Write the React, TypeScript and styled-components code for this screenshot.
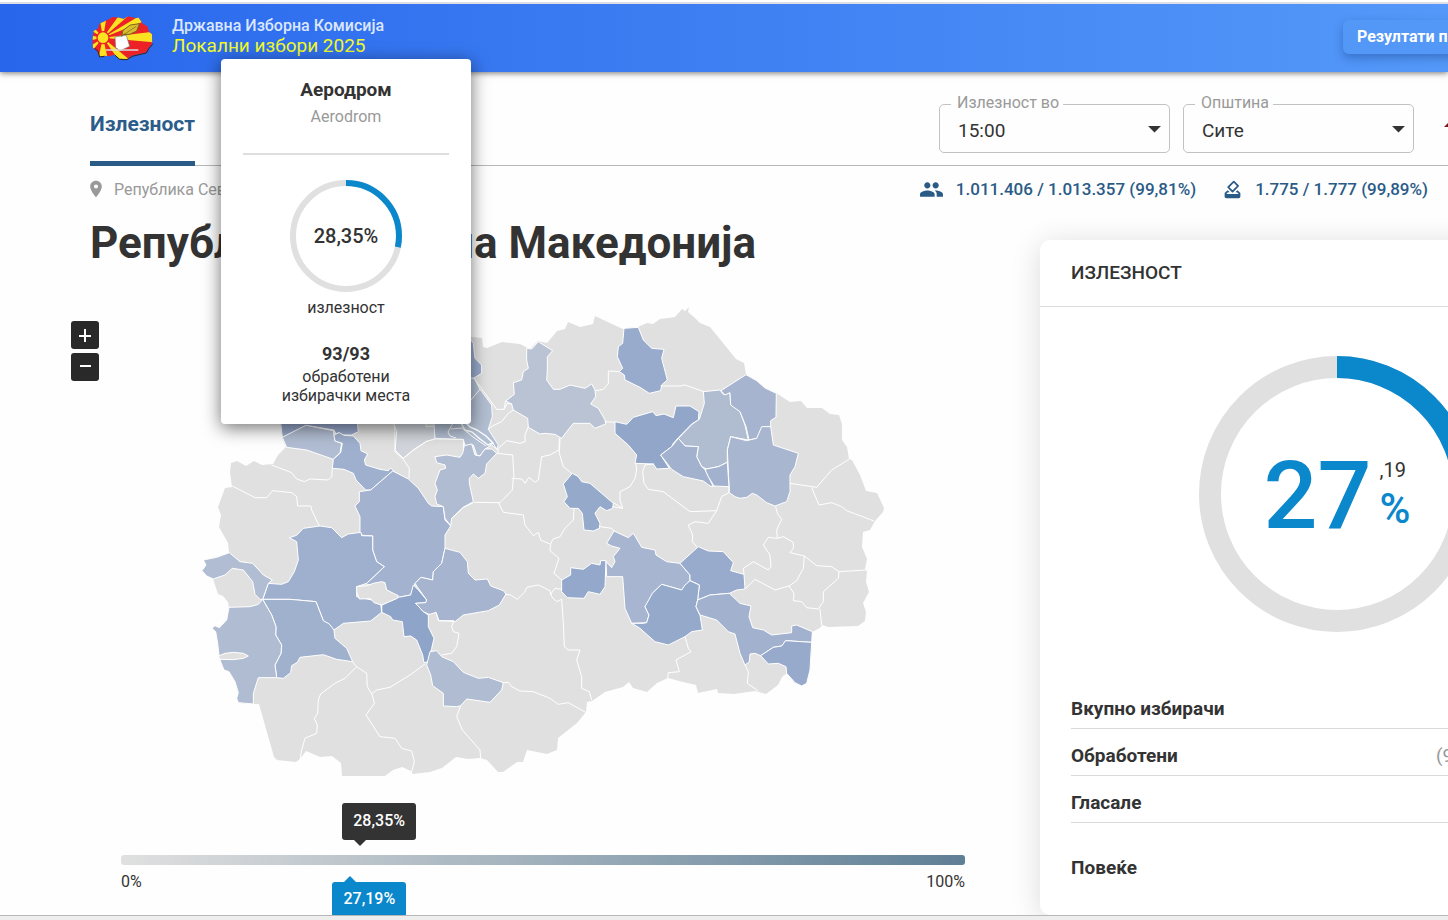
import React from 'react';
import styled, { createGlobalStyle } from 'styled-components';
import { MdArrowDropDown, MdHowToVote, MdLocationOn, MdPeople } from 'react-icons/md';

const GlobalStyle = createGlobalStyle`
  *, *::before, *::after { box-sizing: border-box; }
  body {
    margin: 0;
    background: #fefefe;
    color: #333;
    font-family: Roboto, "Noto Sans", sans-serif;
    font-size: 16px;
  }
  h1, h2, p, ul, dl, dd { margin: 0; padding: 0; }
  button, select { font-family: inherit; }
`;

const Page = styled.div`
  position: relative;
  display: flex;
  flex-direction: column;
  min-height: 100vh;
  overflow: hidden;
  border-top: 2px solid #fff;
`;

const Header = styled.header`
  display: flex;
  align-items: center;
  height: 70px;
  flex: none;
  padding-left: 91px;
  border-top: 2px solid #dcdfe6;
  background: linear-gradient(90deg, #2866ec, #5499f9);
  box-shadow: 0 1px 6px rgba(0, 0, 0, 0.55);
  z-index: 1;
`;

const Brand = styled.a`
  display: flex;
  align-items: center;
  gap: 18px;
  text-decoration: none;
`;

const BrandText = styled.span`
  display: flex;
  flex-direction: column;
  margin-top: -4px;
`;

const Institution = styled.span`
  color: #dbe7ff;
  font-size: 16px;
  font-weight: 500;
  line-height: 20px;
`;

const ElectionName = styled.span`
  color: #f2fb26;
  font-size: 19px;
  line-height: 20px;
`;

const ResultsButton = styled.button`
  width: 200px;
  height: 34px;
  margin: 0 -95px 2px auto;
  padding: 0 14px 2px;
  border: 0;
  border-radius: 6px;
  background: #5397f7;
  color: #fff;
  font-size: 16px;
  font-weight: 700;
  text-align: left;
  white-space: nowrap;
  box-shadow: 0 4px 10px rgba(20, 60, 130, 0.4);
`;

const Main = styled.main`
  flex: 1;
  padding-left: 90px;
`;

const TopBar = styled.div`
  display: flex;
  align-items: stretch;
  height: 94px;
  border-bottom: 1px solid #b5b9bc;
`;

const Tab = styled.a`
  height: 94px;
  padding-top: 38px;
  border-bottom: 5px solid #2a5b87;
  color: #2c5c89;
  font-size: 21px;
  font-weight: 700;
  line-height: 28px;
  text-decoration: none;
`;

const Filters = styled.div`
  display: flex;
  gap: 13px;
  margin-left: auto;
  margin-right: -6px;
  padding-top: 32px;
`;

const Field = styled.div`
  position: relative;
  width: 231px;
  height: 49px;
  border: 1px solid #c2c2c2;
  border-radius: 5px;
`;

const FieldLabel = styled.label`
  position: absolute;
  top: -12px;
  left: 11px;
  padding: 0 4px 0 6px;
  background: #fefefe;
  color: #999;
  font-size: 16px;
  line-height: 20px;
`;

const Select = styled.select`
  width: 100%;
  height: 100%;
  padding: 4px 40px 0 18px;
  border: 0;
  background: transparent;
  color: #333;
  font-size: 19px;
  appearance: none;
`;

const Caret = styled(MdArrowDropDown)`
  position: absolute;
  top: 8px;
  right: -1px;
  width: 31px;
  height: 31px;
  pointer-events: none;
`;

const Alert = styled.svg`
  flex: none;
  width: 12px;
  height: 24px;
  margin: 12px 0 0 15px;
`;

const InfoRow = styled.div`
  display: flex;
  align-items: center;
  justify-content: space-between;
  height: 46px;
  padding-right: 20px;
`;

const Breadcrumb = styled.a`
  display: flex;
  align-items: center;
  gap: 8px;
  margin-left: -4px;
  color: #999;
  text-decoration: none;
`;

const Stats = styled.div`
  display: flex;
  gap: 26px;
`;

const Stat = styled.span`
  display: flex;
  align-items: center;
  gap: 12px;
  color: #2a5b87;
  font-size: 17px;
  font-weight: 500;
`;

const Columns = styled.div`
  display: grid;
  grid-template-columns: minmax(0, 1fr) 594px;
  margin-right: -186px;
`;

const Title = styled.h1`
  padding-top: 3px;
  font-size: 44px;
  font-weight: 700;
  line-height: 56px;
`;

const MapRow = styled.div`
  display: flex;
  align-items: flex-start;
  margin: 29px 0 0 -19px;
`;

const ZoomButtons = styled.div`
  display: flex;
  flex-direction: column;
  gap: 4px;
  margin-top: 21px;
  margin-right: 101px;
`;

const ZoomButton = styled.button`
  display: grid;
  place-items: center;
  width: 28px;
  height: 28px;
  padding: 0;
  border: 0;
  border-radius: 3px;
  background: #292929;
`;

const MapSvg = styled.svg`
  display: block;
  width: 690px;
  height: 480px;
`;

const Legend = styled.div`
  position: relative;
  margin: 23px 75px 0 31px;
`;

const LegendTop = styled.div`
  position: relative;
  height: 52px;
`;

const LegendBar = styled.div`
  height: 10px;
  border-radius: 3px;
  background: linear-gradient(90deg, #e0e0e0, #5f7f96);
`;

const LegendLabels = styled.div`
  display: flex;
  justify-content: space-between;
  padding-top: 7px;
  line-height: 20px;
`;

const Marker = styled.span<{ $color: string; $below?: boolean }>`
  position: absolute;
  top: ${(p) => (p.$below ? '79px' : '0')};
  height: 37px;
  margin-left: -18px;
  padding: 0 11px;
  border-radius: 3px;
  background: ${(p) => p.$color};
  color: #fff;
  font-weight: 500;
  line-height: ${(p) => (p.$below ? '34px' : '35px')};

  &::after {
    content: '';
    position: absolute;
    left: 12px;
    ${(p) => (p.$below ? 'bottom' : 'top')}: 100%;
    border: 6px solid transparent;
    border-${(p) => (p.$below ? 'top' : 'bottom')}-width: 0;
    border-${(p) => (p.$below ? 'bottom' : 'top')}-color: ${(p) => p.$color};
  }
`;

const Card = styled.section`
  margin-top: 28px;
  border-radius: 10px;
  background: #fff;
  box-shadow: 0 4px 30px rgba(0, 0, 0, 0.14);
`;

const CardTitle = styled.h2`
  padding: 0 31px;
  border-bottom: 1px solid #dcdcdc;
  font-size: 19px;
  font-weight: 500;
  line-height: 66px;
`;

const Chart = styled.div`
  display: grid;
  place-items: center;
  padding: 49px 0 50px;
  > * { grid-area: 1 / 1; }
`;

const ChartValue = styled.div`
  display: flex;
  align-items: center;
  gap: 8px;
  padding-top: 3px;
`;

const Whole = styled.span`
  color: #0b87cb;
  font-size: 95px;
  font-weight: 500;
  line-height: 96px;
`;

const Rest = styled.span`
  display: flex;
  flex-direction: column;
  font-size: 20px;
  line-height: 26px;
`;

const Percent = styled.span`
  color: #0b87cb;
  font-size: 42px;
  font-weight: 500;
  line-height: 52px;
`;

const Row = styled.div`
  display: flex;
  justify-content: space-between;
  align-items: center;
  height: 47px;
  margin: 0 31px;
  padding-top: 6px;
  border-bottom: 1px solid #d9d9d9;
  font-size: 19px;
`;

const RowName = styled.span`
  font-weight: 700;
`;

const RowShare = styled.span`
  width: 167px;
  color: #999;
`;

const More = styled.a`
  display: block;
  margin: 0 31px;
  padding-bottom: 2px;
  color: #333;
  font-size: 19px;
  font-weight: 700;
  line-height: 90px;
  text-decoration: none;
`;

const Popup = styled.aside`
  position: absolute;
  z-index: 2;
  top: 57px;
  left: 221px;
  display: flex;
  flex-direction: column;
  align-items: center;
  width: 250px;
  padding: 18px 22px 19px;
  border-radius: 4px;
  background: #fff;
  box-shadow: 0 4px 18px rgba(0, 0, 0, 0.55);
  text-align: center;
`;

const PopupName = styled.strong`
  font-size: 19px;
  line-height: 26px;
`;

const PopupLatin = styled.span`
  margin-bottom: 22px;
  color: #999;
  line-height: 28px;
`;

const PopupChart = styled.div`
  display: grid;
  place-items: center;
  width: 100%;
  padding-top: 25px;
  border-top: 2px solid #dedede;
  font-size: 20px;
  font-weight: 500;
  > * { grid-area: 1 / 1; }
`;

const PopupText = styled.span`
  line-height: 19px;
`;

const PopupLabel = styled.span`
  margin: 4px 0 24px;
  line-height: 24px;
`;

const PopupCount = styled.strong`
  margin-bottom: 3px;
  font-size: 18px;
  font-weight: 700;
  line-height: 20px;
`;

const BottomEdge = styled.div`
  position: relative;
  z-index: 1;
  flex: none;
  height: 5px;
  border-top: 1px solid #b8b8b8;
  background: #eee;
`;

const Body = styled.div`
  display: flex;
  flex-direction: column;
  height: calc(100vh - 77px);
  min-height: 840px;
  overflow: hidden;
`;

type Ring = { size: number; stroke: number; value: number };

function Donut({ size, stroke, value }: Ring) {
  const r = (size - stroke) / 2;
  const length = 2 * Math.PI * r;
  return (
    <svg width={size} height={size} viewBox={`0 0 ${size} ${size}`} aria-hidden="true">
      <g fill="none" strokeWidth={stroke} transform={`rotate(-90 ${size / 2} ${size / 2})`}>
        <circle cx={size / 2} cy={size / 2} r={r} stroke="#e0e0e0" />
        <circle
          cx={size / 2}
          cy={size / 2}
          r={r}
          stroke="#0b87cb"
          strokeDasharray={`${(length * value) / 100} ${length}`}
        />
      </g>
    </svg>
  );
}

function Logo() {
  return (
    <svg width="63" height="46" viewBox="0 0 189 138" aria-hidden="true">
      <defs>
        <clipPath id="country">
          <path d="M8 48 L22 40 L25 26 L48 16 L65 6 L85 8 L98 12 L112 4 L132 9 L143 8 L155 26 L168 33 L175 52 L183 58 L184 85 L172 100 L166 112 L142 118 L122 122 L108 132 L85 131 L72 119 L55 124 L40 122 L25 125 L18 108 L6 98 L4 78 Z" />
        </clipPath>
      </defs>
      <g clipPath="url(#country)">
        <path d="M0 0H189V138H0Z" fill="#ec2227" />
        <g fill="#fbe321">
          <path d="M36 68 L189 50 V82 Z" />
          <path d="M36 68 L85 0 L115 0 Z" />
          <path d="M36 68 L150 0 L170 14 Z" />
          <path d="M36 68 L120 138 L85 138 Z" />
          <path d="M36 68 L20 138 H52 Z" />
          <path d="M36 68 L24 0 H48 Z" />
          <path d="M36 68 L0 28 V46 Z" />
          <path d="M36 68 L0 92 V112 Z" />
          <path d="M36 68 L0 62 V76 Z" />
        </g>
        <circle cx="36" cy="68" r="20" fill="#ec2227" />
        <circle cx="36" cy="68" r="16" fill="#fbe321" />
      </g>
      <path d="M72 66 L106 61 L116 94 L88 107 L74 98 Z" fill="#fff" stroke="#777" strokeWidth="2" />
      <path d="M92 64 L96 46 L118 30 L145 26 L137 48 L116 58 L98 58 Z" fill="#d9bd2e" stroke="#79671d" strokeWidth="3" />
      <path d="M96 60 L136 34" stroke="#79671d" strokeWidth="2" />
      <path d="M45 105 H142" stroke="#ddd" strokeWidth="4" />
      <path d="M10 100 L22 110 L26 126 L40 124 M72 121 L86 133 L108 134 L124 124 L166 114 L174 100 L186 86" fill="none" stroke="#33241c" strokeWidth="3" />
    </svg>
  );
}

const outline =
  '640,326 647,323 653,324 660,319 668,318 675,317 682,309 685,311 689,307 688,312 695,318 700,323 710,327 723,343 736,359 744,363 746,374 757,381 765,388 776,393 790,402 801,401 807,408 822,408 830,414 839,415 842,424 842,440 847,447 849,459 852,460 860,475 866,491 877,493 884,508 883,512 875,521 870,530 863,532 862,547 867,559 865,569 867,571 866,582 869,592 863,603 866,612 865,621 858,626 828,627 822,625 820,628 812,632 812,643 810,670 807,683 802,686 795,683 787,673 782,677 778,685 766,694 755,691 734,694 718,693 717,689 698,693 696,685 683,682 668,678 657,683 647,692 633,688 629,682 623,687 605,692 592,701 587,702 586,712 577,723 558,738 557,750 547,754 527,750 523,762 517,762 503,772 498,772 487,760 480,758 468,759 456,757 442,768 430,772 413,774 411,771 402,767 393,770 385,776 342,776 341,763 332,756 320,757 306,751 300,759 296,762 277,760 274,757 259,704 253,704 238,703 237,698 238,693 235,682 229,672 224,670 219,658 218,643 216,632 212,628 215,626 219,628 227,620 229,608 228,602 223,596 218,594 216,588 213,579 207,576 202,571 206,565 203,560 217,557 229,553 228,543 219,527 221,515 218,507 225,488 232,487 230,472 231,463 237,461 246,466 254,461 262,465 273,464 278,455 286,447 282,438 281,428 275,400 330,360 400,340 460,340 472,337 482,338 483,347 487,348 502,342 520,344 530,349 538,341 547,343 557,331 565,329 568,322 580,327 593,324 595,316 612,324 623,329 638,327';

type Sheet = { origin: [number, number]; areas: [string, string][]; borders: string[] };

// Each sheet holds its municipalities at three units to the map unit, from its own origin.
const sheets: Sheet[] = [
  {
    origin: [200, 400],
    areas: [
      ['#98a9cc', '240,50 247,112 318,76 402,90 408,102 415,98 430,105 455,105 475,95 470,50'],
      ['#b1bdd2', '247,112 318,76 400,92 405,123 425,130 420,158 400,178 320,150 260,142'],
      ['#9fb0ce', '402,105 418,98 432,106 460,108 480,130 483,152 503,162 493,180 497,195 540,208 565,212 572,204 580,212 512,270 497,270 468,240 460,220 432,208 397,205 400,178 422,158 427,130 405,123'],
      ['#d1d5db', '580,50 675,50 678,80 705,80 705,117 680,124 640,150 610,175 585,150 585,95'],
      ['#a3b2cf', '578,213 625,237 655,265 685,310 695,318 730,320 735,360 752,378 735,405 735,445 725,490 700,515 698,540 663,532 645,550 632,585 595,592 560,570 552,548 502,555 500,550 553,500 530,485 518,450 518,408 487,406 480,395 480,350 465,318 478,305 478,275 512,270'],
      ['#9fb0ce', '268,413 290,406 310,385 360,378 395,383 425,413 445,402 483,397 485,407 518,408 518,450 530,485 553,500 500,550 470,560 470,590 515,600 543,615 545,637 512,663 430,670 402,690 370,662 348,605 270,598 188,598 205,550 245,553 265,545 283,515 295,480 290,425'],
      ['#a0b1ce', '188,598 270,598 348,605 370,662 388,672 402,690 405,715 440,745 458,785 410,778 370,764 300,772 292,787 275,797 272,818 250,835 230,833 225,795 243,760 245,735 227,705 228,680 215,645'],
      ['#b1bdd2', '6,512 18,495 10,480 50,472 88,458 120,485 158,490 190,525 217,540 205,550 188,598 180,598 165,583 158,545 130,510 97,505 75,525 40,537 20,528'],
      ['#b0bcd1', '87,622 150,620 175,613 188,598 215,645 228,680 227,705 245,735 243,760 225,795 230,833 175,833 160,880 160,912 115,908 110,895 115,878 105,845 87,815 72,810 58,775 53,730 47,695 36,685 45,677 58,683 80,660'],
      ['#e0e0e0', '55,768 75,760 100,757 130,760 145,768 130,775 100,779 60,778'],
      ['#8fa4c9', '545,615 595,592 632,585 640,555 655,570 680,600 677,608 647,610 670,635 685,645 685,680 702,715 695,745 685,785 672,788 668,765 650,720 632,708 612,710 607,665 578,660 572,650 545,637'],
      ['#a7b4cf', '645,550 663,532 698,540 700,515 725,490 735,445 780,457 802,485 805,520 825,540 862,537 872,558 910,572 918,582 898,615 865,632 790,645 765,665 715,662 708,637 690,643 685,642 670,635 647,610 677,608 680,600 655,565'],
      ['#e0e0e0', '470,560 502,557 520,550 545,545 555,548 560,570 595,587 592,595 545,615 522,608 512,596 478,597 470,575'],
      ['#b0bcd1', '690,755 710,752 725,770 760,785 790,817 835,835 865,832 910,848 905,870 870,907 800,897 782,917 770,920 730,918 730,880 698,857 692,825 680,795'],
    ],
    borders: [
      '97,258 165,293 200,293 218,272 275,278 290,290 293,318 333,318 335,330 358,378',
      '215,195 275,218 290,237 313,245 330,237 385,240 395,230 397,205',
      '583,75 590,95 585,155 610,178 628,205 627,235',
      '610,175 640,150 680,124 705,117 790,118 792,170',
      '458,785 470,800 435,835 405,850 362,882 355,900 353,940 343,955 352,975 350,1000 315,1015 305,1050 300,1080',
      '470,800 500,820 502,860 517,885 523,910 498,945 540,1010 585,1015 605,1045 635,1053 643,1085 635,1115',
      '517,880 530,870 570,862 630,825 675,792',
      '545,637 545,615',
    ],
  },
  {
    origin: [430, 300],
    areas: [
      ['#9aabcd', '123,120 130,130 135,175 155,195 155,220 130,235 90,240 90,100'],
      ['#b3bfd2', '90,230 133,235 150,268 185,315 187,350 175,388 205,435 200,447 185,435 165,447 150,468 140,465 130,435 105,437 100,418 15,415 12,370 60,350'],
      ['#b0bcd1', '15,470 50,465 90,472 98,460 103,437 125,432 135,465 150,468 165,447 185,447 200,460 170,492 165,520 145,535 130,522 118,535 118,550 130,605 100,622 65,655 62,677 45,655 40,620 20,612 15,590 22,570 15,550 30,510 47,505 45,495 20,488'],
      ['#b9c3d3', '290,145 305,147 325,125 368,152 352,170 352,210 350,240 370,268 390,268 420,255 465,265 485,252 495,270 497,290 482,312 505,325 525,360 527,372 495,385 480,370 430,370 410,395 395,415 375,403 345,400 330,402 295,382 293,355 250,330 245,312 227,303 253,283 250,248 275,240 280,215 295,205 290,180'],
      ['#99abcd', '582,85 625,82 640,120 665,145 702,148 695,175 712,240 695,255 692,272 658,280 630,262 585,240 583,225 568,215 578,205 562,170 565,140 578,130'],
      ['#95a9cb', '400,552 427,520 445,530 455,545 480,550 550,610 548,625 530,632 510,620 495,640 510,670 508,685 490,693 462,690 457,640 445,625 420,625 402,605 412,590'],
      ['#93a8ca', '395,840 422,825 422,803 460,808 485,790 510,795 512,782 528,782 525,860 510,883 475,875 462,895 412,893 395,875'],
    ],
    borders: [
      '123,300 150,268',
      '133,235 200,328 222,328 227,303',
      '222,328 232,310 245,312',
      '175,388 187,378 215,365 235,340 250,330',
      '295,380 285,405 285,425 270,430 230,422 205,445 203,460 248,465 252,535',
      '245,535 275,537 285,550 297,532 315,547 325,540 335,470 360,465 387,450 388,415',
      '250,535 247,570 210,608 133,607',
      '390,415 388,460 400,500 425,520',
      '497,272 520,268 535,250 535,213 568,215',
      '527,365 557,367',
      '617,487 620,510 615,535 600,560 570,575 570,600 578,625 550,608',
      '548,620 578,625',
      '18,937 27,962 72,962',
      '72,962 65,980 70,995 87,1000 80,1040 65,1060 35,1065',
      '92,1217 80,1250 97,1290 150,1350 152,1375',
      '220,1148 235,1147 245,1160 270,1173 310,1175 360,1195 385,1213 415,1208 467,1237',
      '225,883 242,885 262,898 285,875 290,862 325,855 360,872 365,890 380,905 395,898 400,970 403,1040 415,1050 450,1050 440,1080 455,1130 455,1165 478,1175 485,1200',
      '360,885 375,865 395,868',
      '205,608 220,637 280,645 285,675 310,707 325,697 332,720 362,733 360,752 387,775 372,820 395,840',
      '362,733 368,718 390,710 405,685 430,660 432,625',
      '65,655 100,622 130,608',
      '510,680 545,685 552,693',
    ],
  },
  {
    origin: [640, 300],
    areas: [
      ['#92a6c9', '-75,365 -40,373 -20,352 38,335 48,347 72,342 100,353 108,318 150,318 177,335 175,360 155,372 115,413 100,430 95,440 62,465 88,505 50,507 40,492 -15,490 -10,465 -35,435 -75,400'],
      ['#a7b5d0', '-100,730 -78,693 -35,713 -20,700 5,742 45,750 48,765 80,785 120,790 150,825 150,842 125,870 65,853 37,880 30,905 15,920 27,945 20,968 -25,970 -45,925 -52,830 -100,830 -102,785 -85,803 -75,785 -80,770 -60,745 -85,738'],
      ['#b0bdd1', '190,275 240,270 250,283 270,278 272,310 300,335 315,375 325,420 272,410 262,450 262,487 235,500 200,507 185,500 170,470 175,440 135,438 115,415 157,372 178,358 193,310'],
      ['#a7b4cf', '243,272 318,224 350,242 375,264 409,280 408,352 392,362 392,380 370,380 350,415 327,420 318,380 300,335 272,315 270,278 255,285'],
      ['#a9b6d0', '392,380 400,435 475,460 465,500 450,525 450,575 440,605 405,618 380,608 350,585 337,580 320,592 300,595 285,590 268,578 262,450 272,410 320,422 350,415 365,380'],
      ['#a2b1ce', '115,415 135,438 175,440 170,470 185,500 195,508 220,560 210,558 190,543 130,530 95,508 62,465 95,440'],
      ['#a2b1ce', '195,508 235,500 262,487 267,560 222,558 205,530'],
      ['#98abcc', '120,790 175,740 205,753 250,755 280,788 272,812 312,823 315,867 290,870 268,880 210,885 173,900 178,855 150,842 150,825'],
      ['#95a9cb', '65,853 125,870 135,855 150,842 178,855 173,900 168,920 180,945 187,990 155,995 135,1010 85,1035 45,1025 0,985 -25,970 10,970 20,968 27,945 15,920 37,880'],
      ['#a1b1ce', '173,900 210,885 268,880 300,910 333,918 327,950 338,983 370,990 395,1005 455,998 455,978 470,975 517,995 515,1027 437,1022 425,1038 400,1042 362,1067 345,1060 330,1062 328,1085 315,1095 300,1060 285,1002 265,995 230,960 180,945 168,920'],
      ['#97aacb', '362,1067 400,1042 425,1038 437,1022 515,1027 510,1110 500,1150 485,1158 465,1148 440,1120 438,1100 415,1090 385,1092'],
    ],
    borders: [
      '15,495 8,515 12,550 25,568 70,575 150,635 230,632 245,590 267,578 267,560',
      '15,495 42,492',
      '230,632 205,670 165,665 145,675 158,705 157,725 170,740',
      '62,258 120,258 135,255 192,275',
      '450,550 530,562 575,510 627,478',
      '515,563 537,615 575,608 605,620 620,632 702,663',
      '407,620 412,640 425,658 410,690 412,715',
      '412,715 385,712 370,735 390,765 393,800 385,810 340,785 310,805 312,823',
      '412,715 430,710 460,727 460,745 450,758 493,768 490,805 470,842 447,858 405,870 345,838 315,867',
      '493,768 530,797 575,800 597,815 680,810',
      '597,815 595,835 550,875 550,905 535,927 500,923 485,905 460,902 462,880 447,858',
      '540,927 545,975',
      '135,1010 145,1045 153,1055 108,1080 118,1115 85,1118 83,1135',
      '315,1095 325,1115 322,1150 355,1173',
    ],
  },
];

function TurnoutMap() {
  return (
    <MapSvg viewBox="200 300 690 480" role="img" aria-label="Мапа на излезност">
      <polygon points={outline} fill="#e0e0e0" />
      {sheets.map((sheet) => (
        <g
          key={sheet.origin.join()}
          transform={`translate(${sheet.origin[0]} ${sheet.origin[1]}) scale(0.33333)`}
          stroke="#fff"
          strokeWidth="3"
          strokeLinejoin="round"
        >
          {sheet.areas.map(([fill, points]) => (
            <polygon key={points} points={points} fill={fill} />
          ))}
          {sheet.borders.map((points) => (
            <polyline key={points} points={points} fill="none" />
          ))}
        </g>
      ))}
      <g fill="none" stroke="#fff" strokeWidth="1" strokeLinejoin="round">
        <path d="M461 423 L465 430 L472 432 L480 439 L488 445 L493 443 L486 436 L477 430 L470 427 L466 423" strokeWidth="1.500" />
        <path d="M453 423 L448 432 L450 436 L456 438 M451 429 L462 428 L473 437 L486 446 M493 443 L497 450" />
      </g>
    </MapSvg>
  );
}

export default function App() {
  return (
    <Page>
      <GlobalStyle />
      <Header>
        <Brand href="#">
          <Logo />
          <BrandText>
            <Institution>Државна Изборна Комисија</Institution>
            <ElectionName>Локални избори 2025</ElectionName>
          </BrandText>
        </Brand>
        <ResultsButton type="button">Резултати по</ResultsButton>
      </Header>

      <Body>
        <Main>
          <TopBar>
            <Tab href="#turnout">Излезност</Tab>
            <Filters>
              <Field>
                <FieldLabel htmlFor="time">Излезност во</FieldLabel>
                <Select id="time" defaultValue="15:00">
                  <option>15:00</option>
                </Select>
                <Caret aria-hidden="true" />
              </Field>
              <Field>
                <FieldLabel htmlFor="municipality">Општина</FieldLabel>
                <Select id="municipality" defaultValue="Сите">
                  <option>Сите</option>
                </Select>
                <Caret aria-hidden="true" />
              </Field>
              <Alert viewBox="0 0 12 24" aria-hidden="true">
                <path d="M2 11 L9 4 V11 Z" fill="#7c1418" />
              </Alert>
            </Filters>
          </TopBar>

          <InfoRow>
            <Breadcrumb href="#">
              <MdLocationOn size={20} />
              <span>Република Северна Македонија</span>
            </Breadcrumb>
            <Stats>
              <Stat>
                <MdPeople size={25} />
                1.011.406 / 1.013.357 (99,81%)
              </Stat>
              <Stat>
                <MdHowToVote size={21} />
                1.775 / 1.777 (99,89%)
              </Stat>
            </Stats>
          </InfoRow>

          <Columns>
            <div>
              <Title>Република Северна Македонија</Title>
              <MapRow>
                <ZoomButtons>
                  <ZoomButton type="button" aria-label="Зголеми">
                    <svg width="14" height="14" viewBox="0 0 14 14">
                      <path d="M7 1V14M1 8H13" stroke="#fff" strokeWidth="2" />
                    </svg>
                  </ZoomButton>
                  <ZoomButton type="button" aria-label="Намали">
                    <svg width="14" height="14" viewBox="0 0 14 14">
                      <path d="M2 6H13" stroke="#fff" strokeWidth="2" />
                    </svg>
                  </ZoomButton>
                </ZoomButtons>
                <TurnoutMap />
              </MapRow>
              <Legend>
                <LegendTop>
                  <Marker $color="#333" style={{ left: '28.35%' }}>28,35%</Marker>
                  <Marker $color="#0b87cb" $below style={{ left: '27.19%' }}>27,19%</Marker>
                </LegendTop>
                <LegendBar />
                <LegendLabels>
                  <span>0%</span>
                  <span>100%</span>
                </LegendLabels>
              </Legend>
            </div>

            <Card>
              <CardTitle>ИЗЛЕЗНОСТ</CardTitle>
              <Chart>
                <Donut size={276} stroke={22} value={27.19} />
                <ChartValue>
                  <Whole>27</Whole>
                  <Rest>
                    <span>,19</span>
                    <Percent>%</Percent>
                  </Rest>
                </ChartValue>
              </Chart>
              <Row>
                <RowName>Вкупно избирачи</RowName>
              </Row>
              <Row>
                <RowName>Обработени</RowName>
                <RowShare>(99,81%)</RowShare>
              </Row>
              <Row>
                <RowName>Гласале</RowName>
              </Row>
              <More href="#more">Повеќе</More>
            </Card>
          </Columns>
        </Main>
      </Body>
      <BottomEdge />

      <Popup>
        <PopupName>Аеродром</PopupName>
        <PopupLatin>Aerodrom</PopupLatin>
        <PopupChart>
          <Donut size={112} stroke={6} value={28.35} />
          <span>28,35%</span>
        </PopupChart>
        <PopupLabel>излезност</PopupLabel>
        <PopupCount>93/93</PopupCount>
        <PopupText>обработени</PopupText>
        <PopupText>избирачки места</PopupText>
      </Popup>
    </Page>
  );
}
